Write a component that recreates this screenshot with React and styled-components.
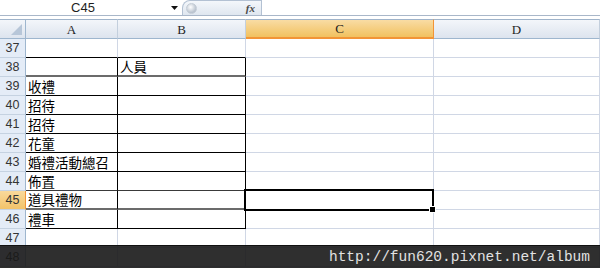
import React from 'react'
import styled, { createGlobalStyle, css } from 'styled-components'

const GlobalStyle = createGlobalStyle`
    html, body {
        margin: 0;
        padding: 0;
        background: #ffffff;
        overflow: hidden;
    }
`;

const Frame = styled.div`
    position: relative;
    width: 600px;
    height: 268px;
    overflow: hidden;
    background: #ffffff;
    font-family: "Liberation Sans", Arial, sans-serif;
`;

const FormulaBar = styled.div`
    display: flex;
    align-items: stretch;
    height: 15px;
    border-bottom: 1px solid #a9b7c9;
    margin-bottom: 3px;
`;

const NameBox = styled.div`
    width: 166px;
    display: flex;
    align-items: center;
    justify-content: center;
    font-size: 13px;
    color: #1e1e1e;
    line-height: 15px;
`;

const Drop = styled.div`
    width: 16px;
    display: flex;
    align-items: center;
    justify-content: center;
`;

const Pill = styled.div`
    width: 80px;
    display: flex;
    align-items: center;
    justify-content: space-between;
    padding: 0 6px 0 3px;
    box-sizing: border-box;
    border: 1px solid #b3c1d3;
    border-bottom: none;
    border-radius: 8px 0 0 0;
    background: linear-gradient(#f4f7fb, #dfe6ef);
`;

const Knob = styled.div`
    width: 9px;
    height: 9px;
    border-radius: 50%;
    background: radial-gradient(circle at 40% 35%, #ffffff, #b8c2ce 70%);
    border: 1px solid #c4ccd6;
`;

const Fx = styled.span`
    font-family: "Liberation Serif", serif;
    font-style: italic;
    font-weight: bold;
    font-size: 11px;
    color: #4a4a4a;
`;

const Sheet = styled.div`
    display: grid;
    grid-template-columns: 26px 92px 128px 188px 1fr;
    grid-auto-rows: 19px;
    grid-template-rows: 20px;
`;

const ColHead = styled.div`
    box-sizing: border-box;
    display: flex;
    align-items: center;
    justify-content: center;
    font-family: "Liberation Serif", serif;
    font-size: 13px;
    color: #1f1f1f;
    border-top: 1px solid #9fb3ca;
    border-right: 1px solid #c3cfdd;
    border-bottom: 1px solid #9eb6ce;
    background: linear-gradient(#f3f6fa, #dde4ee);
    padding-top: 1px;
    ${({ $active }) => $active && css`
        background: linear-gradient(#f9dca4, #f1c15f);
        border-bottom: 2px solid #f29436;
        border-right: 1px solid #f29436;
    `}
`;

const Corner = styled(ColHead)`
    position: relative;
    border-right: 1px solid #9eb6ce;
    &::after {
        content: '';
        position: absolute;
        right: 3px;
        bottom: 3px;
        border-left: 11px solid transparent;
        border-bottom: 11px solid #b7c6d8;
    }
`;

const RowHead = styled.div`
    box-sizing: border-box;
    display: flex;
    align-items: flex-end;
    justify-content: center;
    font-size: 12.5px;
    line-height: 15px;
    color: #343434;
    background: #e4ecf7;
    border-right: 1px solid #9eb6ce;
    border-bottom: 1px solid #c5d2e1;
    padding-bottom: 1px;
    ${({ $active }) => $active && css`
        background: linear-gradient(#f9d99b, #f2c36a);
        border-right: 1px solid #f29436;
    `}
`;

const Cell = styled.div`
    position: relative;
    box-sizing: border-box;
    display: flex;
    align-items: flex-end;
    padding: 0 0 1px 2px;
    font-family: "Noto Sans CJK TC", "Noto Sans CJK SC", sans-serif;
    font-size: 13.5px;
    line-height: 16px;
    color: #000000;
    white-space: nowrap;
    border-right: 1px solid ${({ $r }) => $r || '#d0d7e5'};
    border-bottom: ${({ $bw }) => $bw || 1}px solid ${({ $b }) => $b || '#d0d7e5'};
    ${({ $selected }) => $selected && css`
        &::after {
            content: '';
            position: absolute;
            top: -2px;
            left: -2px;
            right: -1px;
            bottom: -2px;
            border: 2px solid #000000;
        }
        &::before {
            content: '';
            position: absolute;
            right: -3px;
            bottom: -4px;
            width: 5px;
            height: 5px;
            background: #000000;
            border: 1px solid #ffffff;
            z-index: 2;
        }
    `}
`;

const Watermark = styled.div`
    position: absolute;
    left: 0;
    right: 0;
    bottom: 0;
    height: 22px;
    background: rgba(24, 24, 24, 0.9);
    border-top: 1px solid #111111;
    display: flex;
    align-items: center;
    justify-content: flex-end;
    padding-right: 10px;
    font-family: "Liberation Mono", "Courier New", monospace;
    font-size: 14.5px;
    color: #e2e2e2;
`;

const items = [
    { n: 37 },
    { n: 38, b: '人員' },
    { n: 39, a: '收禮' },
    { n: 40, a: '招待' },
    { n: 41, a: '招待' },
    { n: 42, a: '花童' },
    { n: 43, a: '婚禮活動總召' },
    { n: 44, a: '佈置' },
    { n: 45, a: '道具禮物' },
    { n: 46, a: '禮車' },
    { n: 47 },
    { n: 48 },
]

// bottom border of A/B cells per row
const edge = (n) => {
    if (n === 37) return { b: '#000000' }
    if (n === 38) return { b: '#6b6b6b', bw: 2 }
    if (n === 44) return { b: '#3a3a3a' }
    if (n === 45) return { b: '#6b6b6b', bw: 2 }
    if (n >= 39 && n <= 46) return { b: '#000000' }
    return {}
}

const App = () => {
    return (
        <Frame>
            <GlobalStyle />
            <FormulaBar>
                <NameBox>C45</NameBox>
                <Drop>
                    <svg width="7" height="4" viewBox="0 0 7 4">
                        <path d="M0 0 H7 L3.5 4 Z" fill="#111" />
                    </svg>
                </Drop>
                <Pill>
                    <Knob />
                    <Fx>fx</Fx>
                </Pill>
            </FormulaBar>
            <Sheet>
                <Corner />
                <ColHead>A</ColHead>
                <ColHead>B</ColHead>
                <ColHead $active>C</ColHead>
                <ColHead>D</ColHead>
                {items.map((row) => {
                    const e = edge(row.n)
                    const boxed = row.n >= 38 && row.n <= 46
                    const sel = row.n === 45
                    return (
                        <React.Fragment key={row.n}>
                            <RowHead $active={sel}>{row.n}</RowHead>
                            <Cell $b={e.b} $bw={e.bw} $r={boxed ? '#000000' : null}>{row.a}</Cell>
                            <Cell $b={e.b} $bw={e.bw} $r={boxed ? '#000000' : null}>{row.b}</Cell>
                            <Cell $selected={sel} />
                            <Cell />
                        </React.Fragment>
                    )
                })}
            </Sheet>
            <Watermark>http://fun620.pixnet.net/album</Watermark>
        </Frame>
    )
}

export default App
